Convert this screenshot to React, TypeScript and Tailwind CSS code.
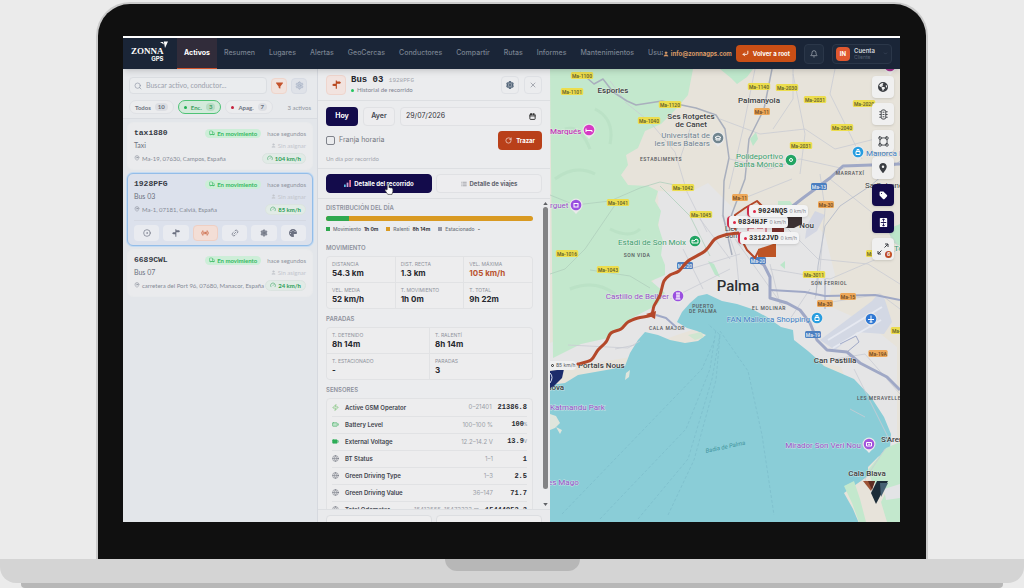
import { ReactNode, useState } from "react";
import {
  Battery,
  BatteryFull,
  Bell,
  ChevronDown,
  CircleDot,
  CornerDownLeft,
  Gauge,
  Globe,
  Link2,
  List,
  Radio,
  RotateCw,
  Search,
  Settings,
  Truck,
  User,
  VectorSquare,
  X,
  Zap,
  Calendar,
  MapPin as PinOutline,
} from "lucide-react";
import { FaEarthAmericas, FaFilter, FaLocationDot, FaPalette, FaTag } from "react-icons/fa6";

// ─────────────────────────────────────────────
// Data
// ─────────────────────────────────────────────

const NAV = [
  "Activos",
  "Resumen",
  "Lugares",
  "Alertas",
  "GeoCercas",
  "Conductores",
  "Compartir",
  "Rutas",
  "Informes",
  "Mantenimientos",
  "Usuarios",
];

const ASSETS = [
  { plate: "taxi880", name: "Taxi", place: "Ma-19, 07630, Campos, España", speed: "104 km/h" },
  { plate: "1928PFG", name: "Bus 03", place: "Ma-1, 07181, Calviá, España", speed: "85 km/h", selected: true },
  { plate: "6689CWL", name: "Bus 07", place: "carretera del Port 96, 07680, Manacor, España", speed: "24 km/h" },
];

const MOVEMENT = [
  ["DISTANCIA", "54.3 km"],
  ["DIST. RECTA", "1.3 km"],
  ["VEL. MÁXIMA", "105 km/h"],
  ["VEL. MEDIA", "52 km/h"],
  ["T. MOVIMIENTO", "1h 0m"],
  ["T. TOTAL", "9h 22m"],
];

const STOPS = [
  ["T. DETENIDO", "8h 14m"],
  ["T. RALENTÍ", "8h 14m"],
  ["T. ESTACIONADO", "-"],
  ["PARADAS", "3"],
];

const SENSORS = [
  { icon: "zap", name: "Active GSM Operator", range: "0–21401", value: "21386.8", unit: "" },
  { icon: "battery", name: "Battery Level", range: "100–100 %", value: "100", unit: "%" },
  { icon: "full", name: "External Voltage", range: "12.2–14.2 V", value: "13.9", unit: "V" },
  { icon: "dot", name: "BT Status", range: "1–1", value: "1", unit: "" },
  { icon: "dot", name: "Green Driving Type", range: "1–3", value: "2.5", unit: "" },
  { icon: "dot", name: "Green Driving Value", range: "36–147", value: "71.7", unit: "" },
  { icon: "dot", name: "Total Odometer", range: "15413555–15473333 m", value: "15444953.2", unit: "" },
];

// ─────────────────────────────────────────────
// Small pieces
// ─────────────────────────────────────────────

function Signpost({ className }: { className?: string }) {
  return (
    <svg viewBox="0 0 24 24" className={className} fill="currentColor" aria-hidden="true">
      <path d="M10 1h3v3h8l3 3-3 3h-8v2v11h-3v-7H4l-4-3 4-3h6z" />
    </svg>
  );
}

function Logo() {
  return (
    <a href="#" aria-label="Zonna GPS" className="relative block pt-0.5 text-white">
      <span className="block font-['Liberation_Serif',serif] text-[9px] leading-[9px] font-bold">ZONNA</span>
      <span className="block text-right font-['Inter',sans-serif] text-[6px] leading-[6px] font-bold">GPS</span>
      <svg viewBox="0 0 8 8" className="absolute -top-1 -right-1 size-2" fill="currentColor" aria-hidden="true">
        <path d="M0 1h3l1 2.500zM3.800 0.500H8L5 7z" />
      </svg>
    </a>
  );
}

function TopBar() {
  return (
    <header className="relative z-10 flex h-[31px] shrink-0 items-stretch bg-[#1a2537] pr-2 pl-2 shadow-md">
      <div className="flex w-[46px] shrink-0 items-center">
        <Logo />
      </div>
      <nav className="flex min-w-0 flex-1 overflow-hidden">
        {NAV.map((item, i) => (
          <a
            key={item}
            href="#"
            className={`flex items-center border-b px-[7px] text-[7px] ${
              i === 0
                ? "border-[#d0542c] bg-[#312c3a] font-bold text-white"
                : "border-transparent font-medium text-[#78818f]"
            }`}
          >
            {item}
          </a>
        ))}
      </nav>
      <div className="flex shrink-0 items-center">
        <span className="flex items-center gap-0.5 text-[6px] font-bold text-[#dd9c68]">
          <User className="size-[6px]" fill="currentColor" />
          info@zonnagps.com
        </span>
        <button className="ml-1 flex h-[17px] items-center gap-1 rounded bg-[#c94f16] px-1.5 text-[6px] font-bold whitespace-nowrap text-white">
          <CornerDownLeft className="size-[7px]" strokeWidth={3} />
          Volver a root
        </button>
        <button aria-label="Notificaciones" className="ml-2 flex size-5 items-center justify-center rounded border border-[#2b3749] bg-[#202c3e] text-[#b2b9c3]">
          <Bell className="size-2" />
        </button>
        <button className="ml-2 flex h-5 w-[60px] items-center gap-1 rounded border border-[#2b3749] bg-[#1e293b] px-[3px] text-left">
          <span className="flex size-[14px] items-center justify-center rounded bg-[#e0582f] text-[6px] font-bold text-white">IN</span>
          <span className="flex-1">
            <span className="block text-[6px] leading-[7px] font-semibold text-[#d5d8dd]">Cuenta</span>
            <span className="block text-[5px] leading-[6px] text-[#566174]">Cliente</span>
          </span>
          <ChevronDown className="size-[5px] text-[#566174]" />
        </button>
      </div>
    </header>
  );
}

// ─────────────────────────────────────────────
// Asset list
// ─────────────────────────────────────────────

function Chip({ label, count, tone }: { label: string; count: number; tone?: "on" | "off" }) {
  return (
    <button
      className={`flex h-[14px] items-center gap-1 rounded-full border px-[5px] text-[6px] font-bold ${
        tone === "on" ? "border-[#4fc276] bg-[#d3eadb] text-[#3f9f61]" : "border-[#dfe1e5] bg-[#ebecee] text-[#6b7280]"
      }`}
    >
      {tone && <span className={`size-[3px] rounded-full ${tone === "on" ? "bg-[#1fb152]" : "bg-[#c4203c]"}`} />}
      {label}
      <span className={`rounded-full px-[3px] text-[6px] leading-2 ${tone === "on" ? "bg-[#b8dcc5]" : "bg-[#dcdee3]"}`}>{count}</span>
    </button>
  );
}

function AssetActions() {
  const icons: ReactNode[] = [
    <CircleDot className="size-2" />,
    <Signpost className="size-2" />,
    <Radio className="size-2" />,
    <Link2 className="size-2 -rotate-45" />,
    <Settings className="size-2" fill="#8b909b" />,
    <FaPalette className="size-2" />,
  ];
  const names = ["Seguir", "Recorrido", "En vivo", "Compartir", "Ajustes", "Color"];
  return (
    <div className="mt-1 grid grid-cols-6 gap-1 border-t border-[#d5d9e3] pt-1">
      {icons.map((icon, i) => (
        <button
          key={names[i]}
          aria-label={names[i]}
          className={`flex h-4 items-center justify-center rounded ${
            i === 2 ? "border border-[#efcfc3] bg-[#f3ded6] text-[#c4532c]" : "bg-[#e9ebf0] text-[#6b7080]"
          }`}
        >
          {icon}
        </button>
      ))}
    </div>
  );
}

function AssetCard({ asset }: { asset: (typeof ASSETS)[number] }) {
  return (
    <article
      className={`rounded-md border px-1.5 pt-1 pb-1 ${
        asset.selected ? "border-[#93bde8] bg-[#dce1ec] ring-1 ring-[#c3daf2]" : "border-[#e8eaec] bg-[#eaebed]"
      }`}
    >
      <div className="flex h-3 items-center gap-1.5">
        <h3 className="flex-1 font-['Liberation_Mono',monospace] text-[8px] font-bold text-[#363a44]">{asset.plate}</h3>
        <span className="flex items-center gap-0.5 rounded-full bg-[#cdeed8] px-1 text-[6px] leading-[9px] font-bold text-[#35b961]">
          <Truck className="size-[6px]" />
          En movimiento
        </span>
        <span className="text-[6px] text-[#8f949e]">hace segundos</span>
      </div>
      <div className="flex h-3 items-center justify-between">
        <span className="text-[7px] text-[#6d7280]">{asset.name}</span>
        <span className="flex items-center gap-0.5 text-[6px] text-[#c3c6cd]">
          <User className="size-[5px]" fill="currentColor" />
          Sin asignar
        </span>
      </div>
      <div className="flex h-[14px] items-center justify-between gap-1">
        <span className="flex min-w-0 items-center gap-0.5 text-[6px] whitespace-nowrap text-[#858a96]">
          <PinOutline className="size-[6px] shrink-0" />
          {asset.place}
        </span>
        <span className="flex shrink-0 items-center gap-0.5 rounded-full border border-[#dbe3e0] bg-[#e1ebe6] px-1 text-[6px] leading-[9px] font-bold text-[#2b9e55]">
          <Gauge className="size-[6px]" />
          {asset.speed}
        </span>
      </div>
      {asset.selected && <AssetActions />}
    </article>
  );
}

function AssetList() {
  return (
    <aside className="flex w-[195px] shrink-0 flex-col border-r border-[#d6d9df] bg-[#e3e6ea] font-['Lato',sans-serif]">
      <div className="flex flex-col gap-1.5 border-b border-[#d9dce1] bg-[#e7e9ec] px-1.5 pt-2 pb-1">
        <div className="flex h-[17px] items-center gap-1 pr-1">
          <label className="flex h-full min-w-0 flex-1 items-center gap-1 rounded border border-[#dbdee2] bg-[#eaecee] px-1 text-[#8f97a6]">
            <Search className="size-2 shrink-0" />
            <input
              aria-label="Buscar"
              placeholder="Buscar activo, conductor..."
              className="w-full min-w-0 bg-transparent text-[7px] outline-none placeholder:text-[#9ba1ad]"
            />
          </label>
          <button aria-label="Filtrar" className="flex size-4 items-center justify-center rounded border border-[#efd5cb] bg-[#f1e3de] text-[#c4532c]">
            <FaFilter className="size-[7px]" />
          </button>
          <button aria-label="Ajustes" className="flex size-4 items-center justify-center rounded border border-[#d7dbe3] bg-[#dfe2e8] text-[#a9b3c5]">
            <Settings className="size-[9px]" fill="#c3cbd8" />
          </button>
        </div>
        <div className="flex items-center gap-1">
          <Chip label="Todos" count={10} />
          <Chip label="Enc." count={3} tone="on" />
          <Chip label="Apag." count={7} tone="off" />
          <span className="ml-auto text-[6px] text-[#8f949e]">3 activos</span>
        </div>
      </div>
      <div className="flex flex-col gap-[3px] px-1 py-[3px]">
        {ASSETS.map((a) => (
          <AssetCard key={a.plate} asset={a} />
        ))}
      </div>
    </aside>
  );
}

// ─────────────────────────────────────────────
// Trip history panel
// ─────────────────────────────────────────────

function SectionTitle({ children }: { children: ReactNode }) {
  return <h4 className="text-[6px] leading-2 font-semibold text-[#8f929d]">{children}</h4>;
}

function StatGrid({ stats, cols }: { stats: string[][]; cols: string }) {
  return (
    <dl className={`mt-1 mb-1.5 grid gap-px overflow-hidden rounded border border-[#e1e2e4] bg-[#e1e2e4] ${cols}`}>
      {stats.map(([label, value]) => (
        <div key={label} className="h-[25px] bg-[#ededee] px-[5px] pt-1">
          <dt className="text-[5px] leading-[7px] text-[#8f939c]">{label}</dt>
          <dd className={`text-[8px] leading-[11px] font-bold ${label === "VEL. MÁXIMA" ? "text-[#b9532f]" : "text-[#25272d]"}`}>
            {value}
          </dd>
        </div>
      ))}
    </dl>
  );
}

function SensorIcon({ icon }: { icon: string }) {
  if (icon === "zap") return <Zap className="size-[7px] text-[#62b95c]" />;
  if (icon === "battery") return <Battery className="size-[7px] text-[#3fae63]" fill="#bfe3ca" />;
  if (icon === "full") return <BatteryFull className="size-[7px] text-[#2fae58]" fill="#2fae58" />;
  return <Globe className="size-[7px] text-[#777b85]" />;
}

function DayDistribution() {
  const legend = [
    ["bg-[#2fa84f]", "Movimiento", "1h 0m"],
    ["bg-[#d99a22]", "Ralentí", "8h 14m"],
    ["bg-[#9497a6]", "Estacionado", "-"],
  ];
  return (
    <section>
      <SectionTitle>DISTRIBUCIÓN DEL DÍA</SectionTitle>
      <div className="mt-1 flex h-[5px] overflow-hidden rounded-full bg-[#d99a22]">
        <div className="w-[11%] bg-[#2fa84f]" />
      </div>
      <ul className="mt-1 mb-[11px] flex gap-2">
        {legend.map(([dot, label, value]) => (
          <li key={label} className="flex items-center gap-[3px] text-[5px] leading-2 font-medium text-[#6d717c]">
            <span className={`size-1 ${dot}`} />
            {label} <b className="text-[#34363d]">{value}</b>
          </li>
        ))}
      </ul>
    </section>
  );
}

function HistoryPanel() {
  const [tab, setTab] = useState(0);
  return (
    <section className="flex w-[232px] shrink-0 flex-col bg-[#ebecee]">
      <div className="flex h-8 shrink-0 items-center gap-[5px] border-b border-[#dddfe2] px-2">
        <span className="flex size-5 items-center justify-center rounded border border-[#efd5cd] bg-[#f2e3df] text-[#b9481f]">
          <Signpost className="size-[9px]" />
        </span>
        <div className="flex-1">
          <h2 className="font-['Liberation_Mono',monospace] text-[9px] leading-[11px] font-bold text-[#24262c]">
            Bus 03 <span className="text-[6px] font-normal text-[#a2a5ad]">1928PFG</span>
          </h2>
          <p className="flex items-center gap-[3px] font-['Lato',sans-serif] text-[6px] leading-2 text-[#7d828e]">
            <span className="size-[3px] rounded-full bg-[#22c55e]" />
            Historial de recorrido
          </p>
        </div>
        <button aria-label="Ajustes" className="flex size-[18px] items-center justify-center rounded border border-[#dfe1e5] text-[#536579]">
          <Settings className="size-2" strokeWidth={4} />
        </button>
        <button aria-label="Cerrar" className="flex size-[18px] items-center justify-center rounded border border-[#dfe1e5] text-[#858a94]">
          <X className="size-2" />
        </button>
      </div>

      <div className="flex shrink-0 flex-col gap-[5px] border-b border-[#dddfe2] px-2 pt-1.5 pb-[5px]">
        <div className="flex h-[19px] gap-[5px]">
          <button className="w-8 rounded bg-[#130b4b] text-[7px] font-bold text-white">Hoy</button>
          <button className="w-8 rounded border border-[#e0e1e4] bg-[#ededef] text-[7px] font-semibold text-[#44474f]">Ayer</button>
          <label className="flex min-w-0 flex-1 items-center rounded border border-[#e0e1e4] bg-[#ededef] px-[5px]">
            <input aria-label="Fecha" defaultValue="29/07/2026" className="w-full min-w-0 bg-transparent text-[7px] text-[#34363c] outline-none" />
            <Calendar className="size-[7px] shrink-0 text-[#222]" strokeWidth={3} />
          </label>
        </div>
        <div className="flex h-[19px] items-center justify-between">
          <label className="flex items-center gap-1 text-[7px] text-[#737781]">
            <input type="checkbox" className="size-[9px] appearance-none rounded-xs border border-[#80838b]" />
            Franja horaria
          </label>
          <button className="flex h-full items-center gap-1 rounded bg-[#b9401a] px-[7px] text-[6px] font-bold text-white">
            <RotateCw className="size-[7px]" />
            Trazar
          </button>
        </div>
        <p className="font-['Lato',sans-serif] text-[6px] leading-2 text-[#a3a6ae]">Un día por recorrido</p>
      </div>

      <div className="relative grid shrink-0 grid-cols-2 gap-1 border-b border-[#dddfe2] px-2 py-[5px] text-[6px] font-bold">
        <button
          onClick={() => setTab(0)}
          className={`flex h-[19px] items-center justify-center gap-[3px] rounded border ${
            tab === 0 ? "border-[#130b4b] bg-[#130b4b] text-white" : "border-[#e0e1e4] bg-[#ededef] text-[#5f636d]"
          }`}
        >
          <svg viewBox="0 0 8 8" className="size-[7px]" aria-hidden="true">
            <path d="M0 5h2v3H0z" fill="#58c0e8" />
            <path d="M3 3h2v5H3z" fill="#c9a0d8" />
            <path d="M6 0h2v8H6z" fill="#e8708f" />
          </svg>
          Detalle del recorrido
        </button>
        <button
          onClick={() => setTab(1)}
          className={`flex h-[19px] items-center justify-center gap-[3px] rounded border ${
            tab === 1 ? "border-[#130b4b] bg-[#130b4b] text-white" : "border-[#e0e1e4] bg-[#ededef] text-[#5f636d]"
          }`}
        >
          <List className="size-[6px]" />
          Detalle de viajes
        </button>
        {/* pointer */}
        <svg viewBox="0 0 16 20" className="absolute top-3.5 left-[66px] h-3 w-2.5" aria-hidden="true">
          <path
            d="M5 11V2.500a1.500 1.500 0 0 1 3 0V8l1-.5 2 .8 1-.3 1.500 1 1 .2V14l-1.500 5H6L1.500 12.500c-.6-1 .8-2 1.700-1.200z"
            fill="#fff"
            stroke="#222"
            strokeWidth="1"
          />
        </svg>
      </div>

      <div className="flex min-h-0 flex-1">
        <div className="min-w-0 flex-1 overflow-hidden px-2 pt-[5px]">
          <DayDistribution />
          <SectionTitle>MOVIMIENTO</SectionTitle>
          <StatGrid stats={MOVEMENT} cols="grid-cols-3" />
          <SectionTitle>PARADAS</SectionTitle>
          <StatGrid stats={STOPS} cols="grid-cols-2" />
          <SectionTitle>SENSORES</SectionTitle>
          <div className="mt-1 rounded border border-[#e1e2e4] bg-[#ededee] px-[5px]">
            <table className="w-full">
              <tbody>
                {SENSORS.map((s) => (
                  <tr key={s.name} className="h-[17px] border-b border-[#e1e2e4]">
                    <td className="w-[13px]">
                      <SensorIcon icon={s.icon} />
                    </td>
                    <td className="text-[6px] font-semibold whitespace-nowrap text-[#41444d]">{s.name}</td>
                    <td>
                      <div className="flex items-center justify-end gap-1.5">
                        <span className="text-[6px] leading-2 whitespace-nowrap text-[#9a9da6]">{s.range}</span>
                        <span className="min-w-7 text-right font-['Liberation_Mono',monospace] text-[7px] leading-2 font-bold text-[#25272d]">
                          {s.value}
                          {s.unit && <span className="text-[5px] font-normal text-[#8f939c]">{s.unit}</span>}
                        </span>
                      </div>
                    </td>
                  </tr>
                ))}
              </tbody>
            </table>
          </div>
        </div>
        {/* scrollbar */}
        <div className="flex w-[9px] shrink-0 flex-col items-center gap-0.5 py-[3px] text-[#606266]">
          <svg viewBox="0 0 6 4" className="h-[3px] w-[5px]" fill="currentColor" aria-hidden="true">
            <path d="M3 0l3 4H0z" />
          </svg>
          <div className="flex w-[5px] flex-1 flex-col pb-3">
            <div className="flex-1 rounded-full bg-[#828385]" />
          </div>
          <svg viewBox="0 0 6 4" className="h-[3px] w-[5px]" fill="currentColor" aria-hidden="true">
            <path d="M3 4l3-4H0z" />
          </svg>
        </div>
      </div>

      <div className="grid h-[13px] shrink-0 grid-cols-2 gap-1 overflow-hidden border-t border-[#dddfe2] bg-[#e9eaec] px-2 pt-[5px]">
        <div className="h-4 rounded border border-[#dcdee1] bg-[#eeeeef]" />
        <div className="h-4 rounded border border-[#dcdee1] bg-[#eeeeef]" />
      </div>
    </section>
  );
}

// ─────────────────────────────────────────────
// Map
// ─────────────────────────────────────────────

const ROAD_TAGS: [string, number, number, string][] = [
  ["Ma-1100", 32, 7, "yellow"],
  ["Ma-1101", 22, 23, "yellow"],
  ["Ma-1120", 120, 36, "yellow"],
  ["Ma-1040", 99, 52, "yellow"],
  ["Ma-1140", 209, 18, "yellow"],
  ["Ma-2030", 237, 19, "yellow"],
  ["Ma-2031", 265, 31, "yellow"],
  ["Ma-2020", 314, 35, "yellow"],
  ["Ma-2040", 292, 59, "yellow"],
  ["Ma-2031", 251, 77, "yellow"],
  ["Ma-1042", 133, 119, "yellow"],
  ["Ma-1041", 68, 134, "yellow"],
  ["Ma-1045", 151, 146, "yellow"],
  ["Ma-1016", 17, 185, "yellow"],
  ["Ma-1043", 58, 201, "yellow"],
  ["Ma-3011", 264, 206, "yellow"],
  ["Ma-15", 324, 185, "yellow"],
  ["Ma-6014", 352, 262, "yellow"],
  ["Ma-11", 212, 43, "orange"],
  ["Ma-11", 190, 129, "orange"],
  ["Ma-30", 276, 136, "orange"],
  ["Ma-15", 298, 228, "orange"],
  ["Ma-30", 275, 235, "orange"],
  ["Ma-19A", 328, 285, "orange"],
  ["Ma-20", 135, 197, "blue"],
  ["Ma-13", 269, 118, "blue"],
  ["Ma-20", 208, 192, "blue"],
  ["Ma-19", 263, 266, "blue"],
];

const TAG_COLORS: Record<string, { bg: string; fg: string }> = {
  yellow: { bg: "#ecdd4e", fg: "#5d5a2a" },
  orange: { bg: "#eda85a", fg: "#6b4620" },
  blue: { bg: "#4c7fc0", fg: "#e8eef6" },
};

type Label = { t: string; x: number; y: number; s: number; c: string; a?: "start" | "middle" | "end"; w?: number };

const LABELS: Label[] = [
  { t: "Esporles", x: 63, y: 24, s: 8, c: "#3b3d40", w: 500 },
  { t: "Palmanyola", x: 209, y: 34, s: 8, c: "#3b3d40", w: 500 },
  { t: "Ses Rotgetes", x: 141, y: 50, s: 8, c: "#3b3d40", w: 500 },
  { t: "de Canet", x: 141, y: 58, s: 8, c: "#3b3d40", w: 500 },
  { t: "Marqués", x: 0, y: 65, s: 8, c: "#c23cb8", a: "start", w: 500 },
  { t: "Universitat de", x: 160, y: 69, s: 8, c: "#6f8290", a: "end" },
  { t: "les Illes Balears", x: 160, y: 77, s: 8, c: "#6f8290", a: "end" },
  { t: "Polideportivo", x: 233, y: 90, s: 8, c: "#3c9f6e", a: "end" },
  { t: "Santa Mónica", x: 233, y: 98, s: 8, c: "#3c9f6e", a: "end" },
  { t: "Mallorca Fashion", x: 316, y: 87, s: 8, c: "#3c7fc6", a: "start" },
  { t: "Sa Cabaneta", x: 315, y: 119, s: 8, c: "#3b3d40", a: "start" },
  { t: "rguet", x: 0, y: 139, s: 8, c: "#9650c8", a: "start" },
  { t: "Llev", x: 175, y: 162, s: 7, c: "#3b3d40", a: "start" },
  { t: "Son", x: 175, y: 169, s: 7, c: "#3b3d40", a: "start" },
  { t: "Nou", x: 264, y: 159, s: 8, c: "#3b3d40", a: "end", w: 500 },
  { t: "Estadi de Son Moix", x: 136, y: 176, s: 8, c: "#3c9f6e", a: "end" },
  { t: "Castillo de Bellver", x: 119, y: 230, s: 8, c: "#9650c8", a: "end" },
  { t: "Palma", x: 188, y: 222, s: 15, c: "#2c2e31", w: 500 },
  { t: "FAN Mallorca Shopping", x: 260, y: 253, s: 8, c: "#3c7fc6", a: "end" },
  { t: "Can Pastilla", x: 285, y: 294, s: 8, c: "#3b3d40", w: 500 },
  { t: "Portals Nous", x: 28, y: 299, s: 8, c: "#3b3d40", a: "start", w: 500 },
  { t: "nova", x: -3, y: 321, s: 8, c: "#3b3d40", a: "start", w: 500 },
  { t: "Katmandu Park", x: 0, y: 341, s: 8, c: "#9650c8", a: "start" },
  { t: "es Mago", x: -2, y: 416, s: 8, c: "#9650c8", a: "start" },
  { t: "Mirador Son Veri Nou", x: 311, y: 379, s: 8, c: "#9650c8", a: "end" },
  { t: "S'Arenal", x: 331, y: 373, s: 8, c: "#3b3d40", a: "start", w: 500 },
  { t: "Cala Blava", x: 317, y: 407, s: 8, c: "#3b3d40", w: 500 },
  { t: "Tot", x: 344, y: 182, s: 8, c: "#3c9f6e", a: "start" },
];

const DISTRICTS: Label[] = [
  { t: "ESTABLIMENTS", x: 111, y: 92, s: 5, c: "#55585c" },
  { t: "MARRATXÍ", x: 300, y: 106, s: 5, c: "#55585c" },
  { t: "SON VIDA", x: 87, y: 188, s: 5, c: "#55585c" },
  { t: "SON FERRIOL", x: 279, y: 216, s: 5, c: "#55585c" },
  { t: "PUERTO", x: 153, y: 239, s: 5, c: "#55585c" },
  { t: "DE PALMA", x: 153, y: 244, s: 5, c: "#55585c" },
  { t: "CALA MAJOR", x: 117, y: 261, s: 5, c: "#55585c" },
  { t: "EL MOLINAR", x: 219, y: 241, s: 5, c: "#55585c" },
  { t: "LES MERAVELLES", x: 307, y: 331, s: 5, c: "#55585c", a: "start" },
];

const ROUTE = [
  [28, 295], [41, 291], [48, 281], [56, 273], [61, 264], [71, 260], [78, 253], [88, 249], [101, 246],
  [104, 237], [110, 226], [114, 212], [120, 206], [129, 202], [138, 192], [155, 182], [165, 170], [175, 166], [188, 164],
];

// Catmull-Rom through the given points
function smooth(pts: number[][]) {
  let d = `M${pts[0][0]} ${pts[0][1]}`;
  for (let i = 0; i < pts.length - 1; i++) {
    const p0 = pts[i - 1] ?? pts[i];
    const p1 = pts[i];
    const p2 = pts[i + 1];
    const p3 = pts[i + 2] ?? p2;
    d += `C${p1[0] + (p2[0] - p0[0]) / 6} ${p1[1] + (p2[1] - p0[1]) / 6} ${p2[0] - (p3[0] - p1[0]) / 6} ${p2[1] - (p3[1] - p1[1]) / 6} ${p2[0]} ${p2[1]}`;
  }
  return d;
}

function Poi({ x, y, color, children }: { x: number; y: number; color: string; children?: ReactNode }) {
  return (
    <g transform={`translate(${x} ${y})`}>
      <path d="M-5.500 3L0 9l5.500-6z" fill="#e9e9ea" />
      <circle r="6.500" fill="#e9e9ea" />
      <circle r="5.300" fill={color} />
      <g fill="none" stroke="#fff" strokeWidth="1">
        {children ?? <rect x="-2" y="-1.500" width="4" height="3.500" />}
      </g>
    </g>
  );
}

function MapDrawing() {
  return (
    <svg
      viewBox="0 0 350 453"
      preserveAspectRatio="xMinYMin slice"
      className="absolute inset-0 h-full w-full font-['Roboto',sans-serif]"
      role="img"
      aria-label="Mapa de Palma"
    >
      <rect width="350" height="453" fill="#e7e3da" />
      {/* built-up areas */}
      <path
        d="M108 122l30 2 20-10 30 30 30-8 35 5 22 25 10 40-8 30 40 18 30 24v130l-20-10-36-100-80-20-60-20-30 10-40 20-60 10-21-4v-20l30-15 60-20 20-40z"
        fill="#e5e5e6"
      />
      {/* hills and parks */}
      <path
        d="M0 0h143l-5 26-12 14-15 15-16 7-7 17-12 7 2 10-7 10 7 10 20 1 10 5-3 10 6 10-3 14 5 16-2 14 4 10v10l-14 6 14 12-8 12-25 13-24 20-27 6-28 14z"
        fill="#c3e8cd"
      />
      <path d="M170 0h33l-6 8-10 7-6-6z" fill="#bfe8cc" />
      <path d="M200 70l6-7 2 7-5 7zM230 196l5-4v8zM158 192l6 3 6 13-5-2zM338 160l12-5v22l-8-4z" fill="#bce6ca" />
      <path d="M228 132h12l6 8-18 4z" fill="#c3e8cd" />
      {/* hill relief */}
      <g fill="none" stroke="#b3dcc0" strokeWidth="3" strokeOpacity=".5">
        <path d="M15 60q15-5 25 20M45 40q20 10 15 35M5 110q20-15 40-5M60 160q20 10 30 0M20 220q25-10 45 5" />
      </g>
      {/* airport */}
      <path d="M270 271l52-39 6-7 6 3 8 25-8 12-27-2-22 18z" fill="#d3d8e4" />
      <path d="M257 156l8-14 10 4-8 16-12 8z" fill="#d3d6e2" />
      <path d="M278 271l54-33M283 279l48-28" stroke="#e6e9f1" strokeWidth="2" />
      {/* sea */}
      <path
        d="M0 316l15-2 13-8 17-3 17-3 13-3 5-13 8-13 7-8 13 3 12 5 15 3 13-2 8-6-9-4-10-3-10-6 5-10 8-9 8-7 9-2 15 7 15 3 15 5 15 8 14 10 12 3 1 10 14 11 8 7 8 8 14 6 16 7 17 18 13 20 7 17-1 15-12 8-10 10v9l-24 17 9 16 8 19H0z"
        fill="#8acdd7"
      />
      <path d="M0 345l6 2 4 7-5 5-5 2zM6 358l6 3-2 4zM76 304l4-3-1 7-4 3z" fill="#dfe5dc" />
      <path d="M138 266l13-3 3 5-9 3z" fill="#cfe6d0" />
      <path d="M294 417l10-5 6 18 6 23h-7l-7-19z" fill="#c3e8cd" />
      <path d="M350 373l-14 6-18 22 4 12 15 8-6 12 6 20h13z" fill="#c3e8cd" />
      <path d="M334 420l16-5v14l-14 2z" fill="#e3e4e6" />
      {/* ferry lanes */}
      <g fill="none" stroke="#78b9c7" strokeWidth=".6" strokeDasharray="3 2">
        <path d="M12 445l140-145 13-30" />
        <path d="M50 450l86-90 24-60 6-40" />
        <path d="M88 450l50-60 24-80 8-45" />
        <path d="M118 446l26-55 22-80 4-45-12-11" />
        <path d="M170 262l28 40 14 64 12 80" />
      </g>
      {/* minor roads */}
      <g fill="none" stroke="#c9ccd3" strokeWidth=".8" strokeLinejoin="round">
        <path d="M75 33l25 20 25 30 12 40 20 40M60 12l15 20M205 0l-12 60-14 60" />
        <path d="M140 60l-10 30M243 0v30l-20 30M285 0l-5 25 20 40 12 25M243 5l12 60-5 40" />
        <path d="M170 50l40 15 45-5 30 20 40-10M180 90l40 10 30-10 45 10M192 130l50-20M270 105l5 35-5 60-5 30" />
        <path d="M220 200l60 10 70-30M238 160l30 30 50 5 32 20M280 110l50 40 20 30M270 235l60-10 20 15" />
        <path d="M172 146l14 40 4 40M150 150l30 40M140 200l50-15M185 170l50 70M120 230l60-30M133 180l20 40" />
        <path d="M304 300l30 60 5 10M285 290l30-5 35 40M335 380l-20 30 10 20" />
        <path d="M18 276l60 3 12-7M65 280l20-4M300 340l15 8M230 235l-10-40M240 250l20-30" />
      </g>
      <g fill="none" stroke="#b0cfbc" strokeWidth=".8" strokeLinejoin="round">
        <path d="M0 126l25 10 35-4 30-13 20-6 25 5M0 205l15-5 20-20 30-44M110 117l30 30 20 40M40 201l40 6 20 12" />
      </g>
      {/* main roads */}
      <g fill="none" stroke="#a9afbd" strokeWidth="1.500" strokeLinejoin="round">
        <path d="M30 3l14 12 9-5 10 13 14 9 9 4 26-4 34 7 20 7 9 14 4 29-5 23-1 34 9 40" />
        <path d="M222 0l-8 40-15 30-4 40-15 40" />
        <path d="M350 92l-30 25-30 20-15 20-7 40-2 30" stroke="#bbc0cc" strokeWidth="1" />
      </g>
      <g fill="none" stroke="#9fa8c6" strokeWidth="3" strokeLinejoin="round">
        <path d="M350 95l-57 2-13 12-27 20-18 14" />
        <path d="M203 189l11 7 6 12v21l17 5 13 7 10 13 7 17 10 10 20 2 13 11 27 14 13 13" />
        <path d="M220 221l35 2 20 4 50-1 25 5" strokeWidth="2" />
        <path d="M275 210v30M297 283l12-10-3-6-16 8" strokeWidth="1" />
        <path d="M106 246l10 3 10 9" strokeWidth="2" />
      </g>

      {ROAD_TAGS.map(([t, x, y, kind], i) => (
        <g key={i}>
          <rect x={x - t.length * 1.6} y={y - 4} width={t.length * 3.2} height="7" rx="1.500" fill={TAG_COLORS[kind].bg} />
          <text x={x} y={y + 1.500} fontSize="5" fontWeight="500" textAnchor="middle" fill={TAG_COLORS[kind].fg}>
            {t}
          </text>
        </g>
      ))}

      {LABELS.map((l) => (
        <text
          key={l.t}
          x={l.x}
          y={l.y}
          fontSize={l.s}
          fontWeight={l.w ?? 400}
          textAnchor={l.a ?? "middle"}
          fill={l.c}
          stroke="#f2f2f0"
          strokeWidth="1"
          strokeOpacity=".6"
          paintOrder="stroke"
        >
          {l.t}
        </text>
      ))}
      {DISTRICTS.map((l) => (
        <text key={l.t} x={l.x} y={l.y} fontSize={l.s} fontWeight="500" textAnchor={l.a ?? "middle"} fill={l.c} letterSpacing=".5">
          {l.t}
        </text>
      ))}
      <text x="156" y="384" fontSize="6" fontStyle="italic" fill="#3f939c" transform="rotate(-12 156 384)">
        Badia de Palma
      </text>

      {/* travelled route */}
      <g fill="none" stroke="#b4482a" strokeWidth="3" strokeLinejoin="round" strokeLinecap="round">
        <path d={smooth(ROUTE)} />
        <path d="M188 164l9 17 8 8 4-8M185 160v-14l10-7 12-7 8 8" strokeWidth="2" />
      </g>
      <path d="M96 245l10-3-1 8z" fill="#b4482a" />
      <path d="M208 180l18-6v14h-18z" fill="#bd5425" />

      <Poi x={39} y={61} color="#d63ac4">
        <path d="M-3-1.500v3.500M-3 .5h6v1.500" />
      </Poi>
      <Poi x={168} y={69} color="#71858f">
        <path d="M-3-.5L0-2l3 1.500L0 1zM-2 .5v1.500h4V.5" />
      </Poi>
      <Poi x={241} y={91} color="#22a563">
        <circle r="1.500" />
      </Poi>
      <Poi x={308} y={83} color="#279de0">
        <path d="M-2-.5h4v3h-4zM-1-.5v-2h2v2" />
      </Poi>
      <Poi x={26} y={136} color="#9a4fe0" />
      <Poi x={145} y={172} color="#22a563">
        <path d="M-3 2V-1l2 1 2-2 2 1v3z" />
      </Poi>
      <Poi x={128} y={227} color="#9a4fe0">
        <path d="M-2-3h4M-1.500 0h3M-2.500 3h5M-1-3v6M1-3v6" />
      </Poi>
      <Poi x={267} y={249} color="#279de0">
        <path d="M-2-.5h4v3h-4zM-1-.5v-2h2v2" />
      </Poi>
      <Poi x={321} y={250} color="#2f78d4">
        <path d="M0-3.500v7M-3 .5h6M-1.500 3h3" />
      </Poi>
      <Poi x={319} y={375} color="#a254dc">
        <path d="M-2.500-1.500h5v3.500h-5z" />
        <circle r=".5" cy=".3" />
      </Poi>
      <Poi x={340} y={-3} color="#a8348f" />

      {/* parked vehicles */}
      <path d="M237 147l15 1v7l-8 4h-12z" fill="#3c3133" />
      <path d="M222 158l12-1v6h-12z" fill="#7a2f2b" />
      <path d="M198 159h18v6h-18z" fill="#f2e6e6" stroke="#bf3048" strokeWidth="1" strokeDasharray="6 3" />
      <path d="M0 302l7-1 7-1-2 9-8 8-4 2z" fill="#1c2b6b" />
      <path d="M0 304q4 4 0 10" fill="none" stroke="#dfe4f2" strokeWidth="1" />

      {/* corner mark */}
      <path d="M313 412h12l-4 10z" fill="#9d5336" />
      <path d="M318 412h7l-3 9z" fill="#5d2d22" />
      <path d="M327 412h11l-12 23-5-11z" fill="#1c2c38" />
      <path d="M330 414h8l-7 14z" fill="#466173" />
    </svg>
  );
}

function VehicleTag({ plate, className }: { plate: string; className: string }) {
  return (
    <div className={`absolute flex h-3 items-center gap-0.5 rounded-sm border-l-2 border-[#cf2f4c] bg-[#f3f3f4] pr-0.5 pl-1 whitespace-nowrap shadow ${className}`}>
      <span className="size-[3px] rounded-full bg-[#dc2646]" />
      <b className="font-['Liberation_Mono',monospace] text-[7px] leading-none text-[#1d1e22]">{plate}</b>
      <span className="text-[5px] leading-none text-[#83868e]">0 km/h</span>
    </div>
  );
}

function MapControls() {
  const controls: [string, ReactNode, boolean][] = [
    ["Tipo de mapa", <FaEarthAmericas className="size-[10px]" />, false],
    [
      "Tráfico",
      <svg viewBox="0 0 12 12" className="size-[11px]" fill="none" stroke="currentColor" aria-hidden="true">
        <rect x="3.500" y="1" width="5" height="10" rx="2" />
        <path d="M1.500 3h2M1.500 6h2M1.500 9h2M8.500 3h2M8.500 6h2M8.500 9h2M5 3.500h2M5 6h2M5 8.500h2" />
      </svg>,
      false,
    ],
    ["Geocercas", <VectorSquare className="size-[11px]" />, false],
    ["Lugares", <FaLocationDot className="size-[10px]" />, false],
    ["Etiquetas", <FaTag className="size-[9px]" />, true],
    [
      "Iconos",
      <svg viewBox="0 0 12 12" className="size-[11px]" aria-hidden="true">
        <rect x="2" y="1" width="8" height="10" rx="1" fill="#fff" />
        <path d="M6 2v3M4.500 3.500L6 2l1.500 1.500M6 10V7M4.500 8.500L6 10l1.500-1.500M3 6h6" fill="none" stroke="#130b4b" strokeWidth="1" />
      </svg>,
      true,
    ],
    [
      "Pantalla completa",
      <svg viewBox="0 0 12 12" className="size-3" fill="none" stroke="currentColor" aria-hidden="true">
        <path d="M8 1h3v3M11 1L7.500 4.500M4 11H1V8M1 11l3.500-3.500" />
      </svg>,
      false,
    ],
  ];
  return (
    <div className="absolute top-[7px] right-1.5 flex flex-col gap-[5px]">
      {controls.map(([label, icon, active]) => (
        <button
          key={label}
          aria-label={label}
          className={`relative flex size-[22px] items-center justify-center rounded shadow ${
            active ? "bg-[#130b4b] text-white" : "bg-[#f0f0f0] text-[#3a3d42]"
          }`}
        >
          {icon}
          {label === "Pantalla completa" && (
            <span className="absolute right-0.5 bottom-0.5 flex size-[7px] items-center justify-center rounded-full bg-[#bd4a24] text-[5px] leading-none font-bold text-white">
              6
            </span>
          )}
        </button>
      ))}
    </div>
  );
}

function FleetMap() {
  return (
    <main className="relative min-w-0 flex-1 overflow-hidden">
      <MapDrawing />
      <VehicleTag plate="0834HJF" className="top-[147px] left-[177px]" />
      <VehicleTag plate="9024NQS" className="top-[136px] left-[197px]" />
      <VehicleTag plate="3312JVD" className="top-[163px] left-[188px]" />
      <div className="absolute top-[292px] left-0 flex h-[9px] items-center gap-0.5 rounded-r-sm bg-[#eff0f0] px-px text-[5px] text-[#55585f]">
        <span className="size-[3px] rounded-full border border-[#222]" />
        85 km/h
      </div>
      <MapControls />
    </main>
  );
}

// ─────────────────────────────────────────────
// Laptop mockup around the app
// ─────────────────────────────────────────────

export default function App() {
  return (
    <div className="flex h-screen flex-col overflow-hidden bg-[#ebebeb] pt-0.5 font-['Inter',sans-serif]">
      <div className="mx-24 flex min-h-0 flex-1 flex-col rounded-t-[34px] border-2 border-b-0 border-[#cbcbcb] bg-[#101010] pt-8 pr-[26px] pb-[37px] pl-[25px]">
        <div className="flex min-h-0 flex-1 flex-col overflow-hidden border-t-2 border-white">
          <TopBar />
          <div className="flex min-h-0 flex-1">
            <AssetList />
            <HistoryPanel />
            <FleetMap />
          </div>
        </div>
      </div>
      <div className="flex h-6 shrink-0 justify-center rounded-b-2xl bg-[#d4d4d4]">
        <div className="h-3 w-[135px] rounded-b-xl bg-[#b7b7b7]" />
      </div>
      <div className="mx-[21px] h-[5px] shrink-0 rounded-b bg-[#b7b7b7]" />
    </div>
  );
}
